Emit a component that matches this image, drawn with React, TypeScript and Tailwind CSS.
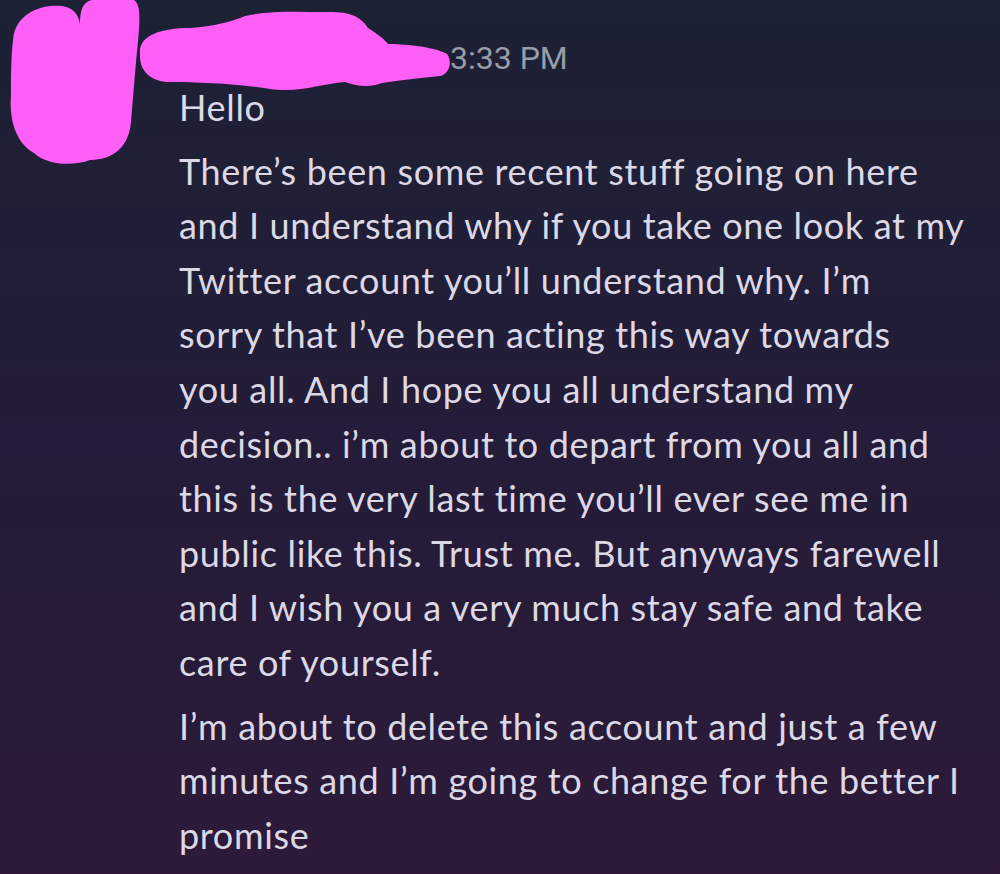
import React from 'react';

const Scribbles: React.FC = () => (
  <svg className="absolute inset-0 pointer-events-none" width="1000" height="874" viewBox="0 0 1000 874">
    {/* avatar cover */}
    <path
      d="M13 40 C 15 14, 40 4, 62 6 C 74 8, 78 14, 80 24 C 80 12, 82 2, 92 0 L 134 0 C 141 4, 140 22, 138 42 C 135 70, 133 100, 131 122 C 129 146, 114 160, 90 160 C 74 166, 48 166, 34 153 C 16 143, 9 120, 11 95 C 11 75, 11 58, 13 40 Z"
      fill="#ff5ef7"
    />
    {/* name cover */}
    <path
      d="M140 54 C 138 36, 160 28, 190 28 C 215 26, 230 22, 245 16 C 270 10, 300 12, 330 12 C 350 12, 360 16, 368 28 C 378 34, 385 40, 388 44 C 402 44, 432 46, 447 54 C 453 62, 449 74, 440 76 C 420 78, 400 80, 382 83 C 370 88, 355 86, 345 82 C 320 84, 300 93, 270 89 C 240 84, 200 82, 170 82 C 150 82, 139 70, 140 54 Z"
      fill="#ff5ef7"
    />
  </svg>
);

const lines1 = [
  'There’s been some recent stuff going on here',
  'and I understand why if you take one look at my',
  'Twitter account you’ll understand why. I’m',
  'sorry that I’ve been acting this way towards',
  'you all. And I hope you all understand my',
  'decision.. i’m about to depart from you all and',
  'this is the very last time you’ll ever see me in',
  'public like this. Trust me. But anyways farewell',
  'and I wish you a very much stay safe and take',
  'care of yourself.',
];

const lines2 = [
  'I’m about to delete this account and just a few',
  'minutes and I’m going to change for the better I',
  'promise',
];

const App: React.FC = () => {
  return (
    <div className="relative w-[1000px] h-[874px] overflow-hidden bg-gradient-to-b from-[#1c2134] via-[#241c38] to-[#2c1a38]">
      <div className="pl-[179px] pt-[36px]">
        <div className="h-[44px] flex items-center pl-[271px]">
          <span className="text-[32px] text-[#9a9ca8] font-['Roboto',sans-serif]">3:33 PM</span>
        </div>
        <div className="text-[36px] leading-[54.6px] tracking-[0.65px] text-[#dcd8e6] font-['Lato',sans-serif] whitespace-nowrap">
          <p>Hello</p>
          <p className="mt-[9px]">
            {lines1.map((l) => (
              <span key={l} className="block">{l}</span>
            ))}
          </p>
          <p className="mt-[9px]">
            {lines2.map((l) => (
              <span key={l} className="block">{l}</span>
            ))}
          </p>
        </div>
      </div>
      <Scribbles />
    </div>
  );
};

export default App;
